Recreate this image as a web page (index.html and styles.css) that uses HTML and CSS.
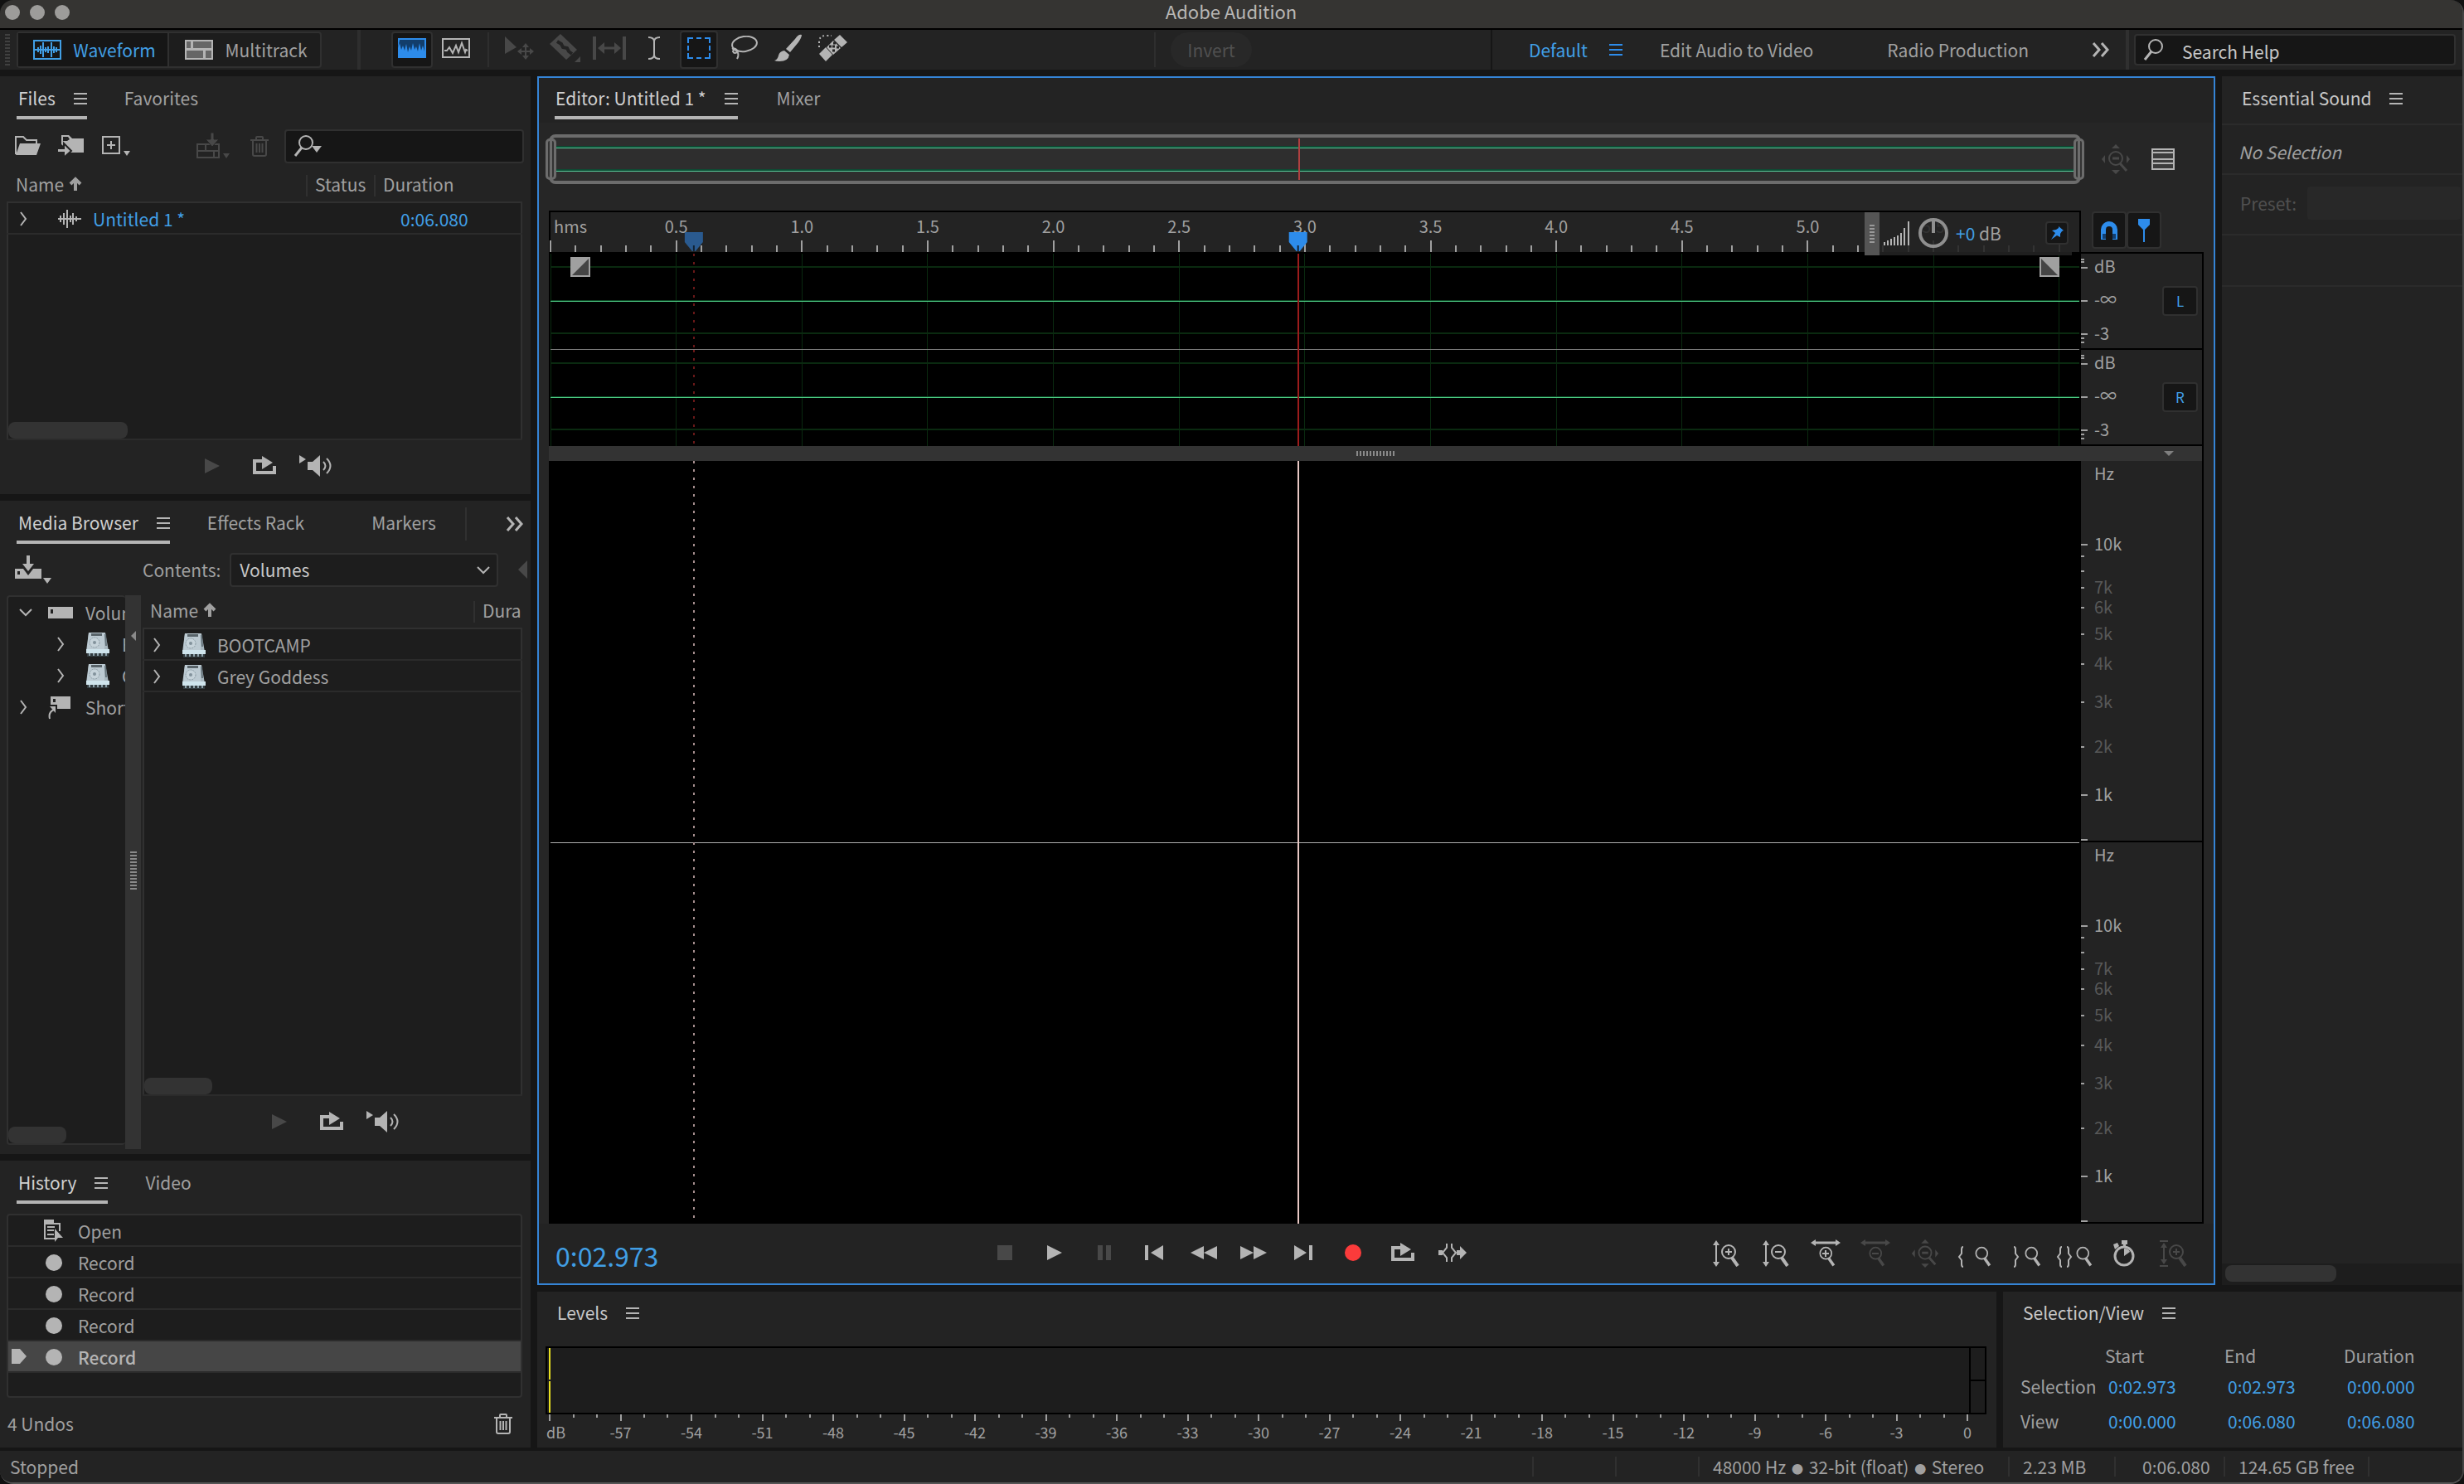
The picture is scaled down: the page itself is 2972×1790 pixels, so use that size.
FILE: index.html
```html
<!DOCTYPE html>
<html lang="en">
<head>
<meta charset="utf-8">
<title>Adobe Audition</title>
<link rel="stylesheet" href="styles.css">
</head>
<body>
<svg class="sprite" aria-hidden="true">
  <symbol id="menu" viewBox="0 0 16 14"><path d="M0 1h16M0 7h16M0 13h16" stroke="currentColor" stroke-width="2"/></symbol>
  <symbol id="more" viewBox="0 0 22 18"><path d="M2 1l7 8-7 8M12 1l7 8-7 8" fill="none" stroke="currentColor" stroke-width="3"/></symbol>
  <symbol id="right" viewBox="0 0 10 18"><path d="M2 1l6 8-6 8" fill="none" stroke="currentColor" stroke-width="2"/></symbol>
  <symbol id="down" viewBox="0 0 16 10"><path d="M1 1l7 7 7-7" fill="none" stroke="currentColor" stroke-width="2"/></symbol>
  <symbol id="up" viewBox="0 0 16 18"><path d="M8 17V3M2 9l6-6 6 6" fill="none" stroke="currentColor" stroke-width="4"/></symbol>
  <symbol id="search" viewBox="0 0 34 26"><circle cx="16" cy="9" r="8" fill="none" stroke="currentColor" stroke-width="2"/><path d="M11 15L3 25" stroke="currentColor" stroke-width="3"/></symbol>
  <symbol id="trash" viewBox="0 0 22 26"><path d="M0 6h22M7 5V3q0-1 1-1h6q1 0 1 1v2M3 7v16q0 2 2 2h12q2 0 2-2V7M7.500 10v11M11 10v11M14.500 10v11" fill="none" stroke="currentColor" stroke-width="2"/></symbol>
  <symbol id="play" viewBox="0 0 20 20"><path d="M1 1v18l18-9z" fill="currentColor"/></symbol>
  <symbol id="loop" viewBox="0 0 30 24"><path d="M12 6H3v14h24v-8" fill="none" stroke="currentColor" stroke-width="4"/><path d="M12 0l13 8-13 8z" fill="currentColor"/></symbol>
  <symbol id="autoplay" viewBox="0 0 42 28"><path d="M1 1l8 5-8 5zM11 9h6l9-8v26l-9-8h-6z" fill="currentColor"/><path d="M30 9q5 5 0 10M34 5q9 9 0 18" fill="none" stroke="currentColor" stroke-width="2"/></symbol>
  <symbol id="drive" viewBox="0 0 28 30"><path d="M3 1h20l4 22H0z" fill="#a9b8c0"/><path d="M3 1h19v20H1z" fill="#bccad2"/><path d="M6 2h13v3H6z" fill="#59646a"/><circle cx="10" cy="13" r="6" fill="#c6d3da" stroke="#8b9ba3" stroke-dasharray="2 1"/><circle cx="10" cy="13" r="2" fill="#82929b"/><path d="M23 3l1 14" stroke="#66747b" stroke-width="2"/><path d="M0 21h28v5H0z" fill="#cfe4ec"/><path d="M1 26h26v4H1z" fill="#333c40"/><path d="M4 26v3M9 26v3M14 26v3M19 26v3M24 26v3" stroke="#8fa3ac" stroke-width="2"/></symbol>
  <symbol id="lens" viewBox="0 0 22 30"><circle cx="9" cy="10" r="8" fill="none" stroke="currentColor" stroke-width="2"/><path d="M13 17l7 10" stroke="currentColor" stroke-width="4"/></symbol>
</svg>

<header class="titlebar">
  <div class="lights"><i></i><i></i><i></i></div>
  <h1>Adobe Audition</h1>
</header>

<nav class="toolbar">
  <span class="grip"></span>
  <div class="modes">
    <button class="on"><svg width="34" height="24" viewBox="0 0 34 24"><path d="M1 1h32v22H1zM1 12h32M6 9v6M9 7v10M12 3v18M15 9v6M18 8v8M22 3v18M25 8v8M28 9v6" fill="none" stroke="currentColor" stroke-width="2"/></svg>Waveform</button>
    <button><svg width="34" height="24" viewBox="0 0 34 24"><path d="M0 0h34v24H0z" fill="#b4b4b4"/><path d="M2 2h5v8H2zM10 2h22v8H10zM2 13h20v9H2zM25 13h7v9h-7z" fill="#666"/></svg>Multitrack</button>
  </div>
  <span class="rule thick"></span>
  <div class="views">
    <button class="on" aria-label="Spectral display"><svg width="34" height="24" viewBox="0 0 34 24"><path d="M0 0h34v24H0z" fill="#2d8ceb"/><path d="M2 2h30v14l-2-7-2 6-2-9-2 10-2-6-2 4-2-8-2 9-2-5-2 7-2-10-2 8-2-6-2 5-2-8-2 6z" fill="#123e6b"/></svg></button>
    <button aria-label="Waveform display"><svg width="34" height="24" viewBox="0 0 34 24"><path d="M1 1h32v22H1z" fill="none" stroke="#b4b4b4" stroke-width="2"/><path d="M3 15h3l3-4 4 7 4-9 3 8 4-11 4 11 1-3 2 1" fill="none" stroke="#b4b4b4" stroke-width="2"/></svg></button>
  </div>
  <span class="rule"></span>
  <div class="tools">
    <button disabled aria-label="Move tool"><svg width="38" height="28" viewBox="0 0 38 28"><path d="M1 0v21l14-8zM26 8l4 5h-3v4h4v-3l5 4-5 4v-3h-4v4h3l-4 5-4-5h3v-4h-4v3l-5-4 5-4v3h4v-4h-3z" fill="currentColor"/></svg></button>
    <button disabled aria-label="Razor tool"><svg width="38" height="36" viewBox="0 0 38 36"><path d="M14 1l20 19-13 12L1 13z" fill="currentColor"/><path d="M10 10l5 3 2 4 5 1 2 4 4 3" fill="none" stroke="#232323" stroke-width="4"/><path d="M38 28v7h-7z" fill="currentColor"/></svg></button>
    <button disabled aria-label="Slip tool"><svg width="40" height="28" viewBox="0 0 40 28"><path d="M2 0v28M38 0v28" stroke="currentColor" stroke-width="4"/><path d="M11 14h18" stroke="currentColor" stroke-width="3"/><path d="M6 14l8-7v14zM34 14l-8-7v14z" fill="currentColor"/></svg></button>
    <button aria-label="Time selection tool"><svg width="16" height="30" viewBox="0 0 16 30"><path d="M1 2q7 0 7 5 0-5 7-5M8 7v16M1 28q7 0 7-5 0 5 7 5" fill="none" stroke="currentColor" stroke-width="2"/></svg></button>
    <button class="on" aria-label="Marquee selection tool"><svg width="28" height="26" viewBox="0 0 28 26"><path d="M1 7V1h6M11 1h6M21 1h6v6M27 10v6M27 19v6h-6M17 25h-6M7 25H1v-6M1 16v-6" fill="none" stroke="currentColor" stroke-width="2"/></svg></button>
    <button aria-label="Lasso selection tool"><svg width="34" height="30" viewBox="0 0 34 30"><ellipse cx="18" cy="10" rx="15" ry="9" fill="none" stroke="currentColor" stroke-width="2" transform="rotate(-8 18 10)"/><path d="M3 16q4-2 7 3-4 4-6 0 1-4 5 0 3 4 0 9" fill="none" stroke="currentColor" stroke-width="2"/></svg></button>
    <button aria-label="Paintbrush selection tool"><svg width="34" height="34" viewBox="0 0 34 34"><path d="M33 1q-4-1-8 5L14 18l5 4L29 10q4-6 4-9zM12 20l6 5q-1 8-12 8-4 0-6-1 4-1 5-6 1-5 7-6z" fill="currentColor"/></svg></button>
    <button aria-label="Spot healing brush tool"><svg width="36" height="34" viewBox="0 0 36 34"><path d="M26 1l9 9-7 6-9-9zM9 16l8 9-8 8-8-9zM18 8l9 9-9 8-8-9z" fill="currentColor"/><path d="M13 15h3M18 11h3M17 20h3M22 16h3M17 15h3" stroke="#232323" stroke-width="3"/><path d="M1 16v-6q0-8 8-8h7" fill="none" stroke="currentColor" stroke-width="2" stroke-dasharray="2 3"/></svg></button>
  </div>
  <div class="options"><button class="pill" disabled>Invert</button></div>
  <div class="workspaces">
    <a class="current" href="#default">Default<svg class="menu"><use href="#menu"/></svg></a>
    <a href="#edit-audio">Edit Audio to Video</a>
    <a href="#radio">Radio Production</a>
    <button aria-label="More workspaces"><svg class="more"><use href="#more"/></svg></button>
  </div>
  <label class="help"><svg width="34" height="26"><use href="#search"/></svg><input type="text" placeholder="Search Help" aria-label="Search Help"></label>
</nav>

<main>
  <div class="side">
    <section class="panel files">
      <div class="tabs"><button class="tab on">Files<svg class="menu"><use href="#menu"/></svg></button><button class="tab">Favorites</button></div>
      <div class="bar">
        <button aria-label="Open file"><svg width="32" height="24" viewBox="0 0 32 24"><path d="M1 22V1h9l4 4h12v4" fill="none" stroke="currentColor" stroke-width="2"/><path d="M6 9h25l-5 14H1z" fill="currentColor"/></svg></button>
        <button aria-label="Import file"><svg width="34" height="28" viewBox="0 0 34 28"><path d="M5 12V1h9l4 4h14v17H16z" fill="currentColor"/><path d="M7 3h6l2 3-3 2H7z" fill="#232323"/><path d="M0 17h8v-6l9 9-9 8v-6H0z" fill="currentColor" stroke="#232323" stroke-width="2"/></svg></button>
        <button aria-label="New file"><svg width="36" height="24" viewBox="0 0 36 24"><path d="M2 1h20v20H2zM12 6v10M7 11h10" fill="none" stroke="currentColor" stroke-width="2"/><path d="M27 18h8l-4 6z" fill="currentColor"/></svg></button>
        <button class="insert" disabled aria-label="Insert into multitrack"><svg width="42" height="32" viewBox="0 0 42 32"><path d="M2 14h26v16H2zM2 22h26M12 14v8M22 22v8" fill="none" stroke="currentColor" stroke-width="2"/><path d="M18 0h4v8h6l-8 9-8-9h6z" fill="currentColor" stroke="#232323"/><path d="M33 25h8l-4 6z" fill="currentColor"/></svg></button>
        <button class="delete" disabled aria-label="Delete"><svg width="22" height="26"><use href="#trash"/></svg></button>
        <label class="filter"><svg width="34" height="26"><use href="#search"/></svg><svg class="caret" width="12" height="8" viewBox="0 0 12 8"><path d="M0 0h12L6 8z" fill="currentColor"/></svg><input type="text" aria-label="Filter files"></label>
      </div>
      <div class="list">
        <table>
          <thead><tr><th>Name<svg width="16" height="18"><use href="#up"/></svg></th><th class="status">Status</th><th class="dur">Duration</th></tr></thead>
          <tbody>
            <tr><td><span class="cell blue"><svg width="10" height="18"><use href="#right"/></svg><svg class="wave" width="28" height="22" viewBox="0 0 28 22"><path d="M0 11h28M3 7v8M7 4v14M11 0v22M15 7v8M18 4v14M22 8v6" stroke="currentColor" stroke-width="2"/></svg>Untitled 1 *</span></td><td></td><td class="blue time">0:06.080</td></tr>
            <tr class="fill"><td colspan="3"></td></tr>
          </tbody>
        </table>
        <span class="thumb"></span>
      </div>
      <div class="preview">
        <button disabled aria-label="Play"><svg width="20" height="20"><use href="#play"/></svg></button>
        <button aria-label="Loop playback"><svg width="30" height="24"><use href="#loop"/></svg></button>
        <button aria-label="Auto-play"><svg width="42" height="28"><use href="#autoplay"/></svg></button>
      </div>
    </section>

    <section class="panel media">
      <div class="tabs"><button class="tab on">Media Browser<svg class="menu"><use href="#menu"/></svg></button><button class="tab">Effects Rack</button><button class="tab">Markers</button><button class="overflow" aria-label="More panels"><svg class="more"><use href="#more"/></svg></button></div>
      <div class="bar">
        <button class="ingest" aria-label="Add shortcut"><svg width="44" height="34" viewBox="0 0 44 34"><path d="M0 16h10l6 8 6-8h10v12H0z" fill="currentColor"/><path d="M14 0h4v10h5l-7 9-7-9h5z" fill="currentColor"/><path d="M3 19h3v4H3z" fill="#232323"/><path d="M34 27h10l-5 7z" fill="currentColor"/></svg></button>
        <label for="contents">Contents:</label>
        <span class="select"><select id="contents"><option>Volumes</option></select><svg width="16" height="10"><use href="#down"/></svg></span>
        <button class="back" disabled aria-label="Back"><svg width="12" height="22" viewBox="0 0 12 22"><path d="M0 11L11 0v22z" fill="currentColor"/></svg></button>
      </div>
      <div class="browser">
        <div class="tree">
          <ul>
            <li><svg width="16" height="10"><use href="#down"/></svg><svg class="vol" width="30" height="14" viewBox="0 0 30 14"><path d="M0 0h30v14H0z" fill="#b4b4b4"/><path d="M3 3h3v5H3z" fill="#232323"/></svg>Volumes</li>
            <li class="sub"><svg width="16" height="18"><use href="#right"/></svg><svg width="28" height="30"><use href="#drive"/></svg>BOOTCAMP</li>
            <li class="sub"><svg width="16" height="18"><use href="#right"/></svg><svg width="28" height="30"><use href="#drive"/></svg>Grey Goddess</li>
            <li><svg class="tip" width="10" height="18"><use href="#right"/></svg><svg class="cut" width="30" height="30" viewBox="0 0 30 30"><path d="M3 2h24v15H11v-5H3z" fill="#b4b4b4"/><path d="M6 5h3v4H6z" fill="#232323"/><path d="M2 29q-2-8 5-11" fill="none" stroke="#b4b4b4" stroke-width="2"/><path d="M2 14h7v8z" fill="#b4b4b4"/></svg>Shortcuts</li>
          </ul>
          <span class="thumb"></span>
        </div>
        <div class="splitter"><svg width="6" height="12" viewBox="0 0 6 12"><path d="M0 6l6-6v12z" fill="#8a8a8a"/></svg><i class="dots"></i></div>
        <div class="contents">
          <div class="list">
            <table>
              <thead><tr><th>Name<svg width="16" height="18"><use href="#up"/></svg></th><th class="dur">Dura</th></tr></thead>
              <tbody>
                <tr><td colspan="2"><span class="cell"><svg width="10" height="18"><use href="#right"/></svg><svg class="disk" width="28" height="30"><use href="#drive"/></svg>BOOTCAMP</span></td></tr>
                <tr><td colspan="2"><span class="cell"><svg width="10" height="18"><use href="#right"/></svg><svg class="disk" width="28" height="30"><use href="#drive"/></svg>Grey Goddess</span></td></tr>
                <tr class="fill"><td colspan="2"></td></tr>
              </tbody>
            </table>
            <span class="thumb"></span>
          </div>
          <div class="preview">
            <button disabled aria-label="Play"><svg width="20" height="20"><use href="#play"/></svg></button>
            <button aria-label="Loop playback"><svg width="30" height="24"><use href="#loop"/></svg></button>
            <button aria-label="Auto-play"><svg width="42" height="28"><use href="#autoplay"/></svg></button>
          </div>
        </div>
      </div>
    </section>

    <section class="panel history">
      <div class="tabs"><button class="tab on">History<svg class="menu"><use href="#menu"/></svg></button><button class="tab">Video</button></div>
      <ol>
        <li><svg width="26" height="28" viewBox="0 0 26 28"><path d="M2 1v22h12M2 5h18v9" fill="none" stroke="currentColor" stroke-width="2"/><path d="M1 0h12v5H1zM14 11v16l4-5h6z" fill="currentColor"/><path d="M5 9h9M5 13h8M5 18h8" stroke="currentColor" stroke-width="2"/></svg>Open</li>
        <li><i class="dot"></i>Record</li>
        <li><i class="dot"></i>Record</li>
        <li><i class="dot"></i>Record</li>
        <li class="on"><svg class="here" width="18" height="18" viewBox="0 0 18 18"><path d="M0 0h10l8 9-8 9H0z" fill="currentColor"/></svg><i class="dot"></i>Record</li>
      </ol>
      <footer>4 Undos<button aria-label="Clear history"><svg width="22" height="26"><use href="#trash"/></svg></button></footer>
    </section>
  </div>

  <div class="work">
    <div class="upper">
      <section class="panel editor">
        <div class="tabs"><button class="tab on">Editor: Untitled 1 *<svg class="menu"><use href="#menu"/></svg></button><button class="tab">Mixer</button></div>
        <div class="stage">
          <div class="overview"><i class="lane"></i><i class="lane"></i><i class="handle left"></i><i class="handle right"></i><i class="head"></i></div>
          <div class="corner">
            <button disabled aria-label="Zoom out full"><svg width="34" height="36" viewBox="0 0 34 36"><path d="M17 0l5 5H12zM17 36l5-5H12zM0 18l4-5v10zM34 18l-4-5v10z" fill="currentColor"/><circle cx="17" cy="17" r="8" fill="none" stroke="currentColor" stroke-width="2"/><path d="M13 17h8M22 23l8 9" stroke="currentColor" stroke-width="3"/></svg></button>
            <button aria-label="Show list"><svg width="28" height="26" viewBox="0 0 28 26"><path d="M0 0h28v26H0z" fill="#b4b4b4"/><path d="M2 2h24v2H2zM2 6h24v6H2zM2 14h24v3H2zM2 19h24v5H2z" fill="#3c3c3c"/></svg></button>
          </div>

          <div class="ruler">
            <svg id="ruler" width="100%" height="48"></svg>
            <div class="hud">
              <span class="hold"><i></i></span>
              <svg width="32" height="30" viewBox="0 0 32 30"><path d="M1 30v-4M5 30v-6M9 30v-8M13 30v-10M17 30V18M21 30V15M25 30V9M30 30V1" stroke="#b4b4b4" stroke-width="2"/></svg>
              <svg width="36" height="36" viewBox="0 0 36 36"><circle cx="18" cy="18" r="16" fill="none" stroke="#8f8f8f" stroke-width="4"/><path d="M18 1v17" stroke="#8f8f8f" stroke-width="4"/></svg>
              <span class="gain"><b>+0</b> dB</span>
              <button class="key" aria-label="Pin HUD"><svg width="18" height="18" viewBox="0 0 18 18"><path d="M11 1l6 5-2 1-2 3v4l-4-2-7 5 5-8-4-3 5-1 3-2z" fill="#2d8ceb"/></svg></button>
            </div>
          </div>
          <div class="snaps">
            <button class="key" aria-label="Snapping"><svg width="24" height="25" viewBox="0 0 24 25"><path d="M5 24V12a7 7 0 0 1 14 0v12" fill="none" stroke="#2d8ceb" stroke-width="6"/><path d="M4 17h4v6H4zM16 17h4v6h-4z" fill="#124072"/></svg></button>
            <button class="key" aria-label="Show markers"><svg width="14" height="28" viewBox="0 0 14 28"><path d="M0 0h14v7l-6 6v15H6V13L0 7z" fill="#2d8ceb"/></svg></button>
          </div>

          <div class="channel first"><svg class="wavebox" width="100%" height="116"></svg>
            <svg class="fade in" width="24" height="24" viewBox="0 0 24 24"><path d="M0 0h24v24H0z" fill="#a0a0a0"/><path d="M22 2v20H2z" fill="#444"/></svg>
            <svg class="fade out" width="24" height="24" viewBox="0 0 24 24"><path d="M0 0h24v24H0z" fill="#a0a0a0"/><path d="M2 2v20h20z" fill="#444"/></svg>
          </div>
          <div class="scale db first"><svg width="66" height="114"><path d="M0 7h4M0 10h4M0 17h8M0 57h8M0 97h8M0 102h4M0 107h4" stroke="#a0a0a0" stroke-width="2"/><text x="16" y="23">dB</text><text x="16" y="63">-∞</text><text x="16" y="104">-3</text></svg><button class="key">L</button></div>
          <div class="channel"><svg class="wavebox" width="100%" height="116"></svg></div>
          <div class="scale db"><svg width="66" height="114"><path d="M0 7h4M0 10h4M0 17h8M0 57h8M0 97h8M0 102h4M0 107h4" stroke="#a0a0a0" stroke-width="2"/><text x="16" y="23">dB</text><text x="16" y="63">-∞</text><text x="16" y="104">-3</text></svg><button class="key">R</button></div>

          <div class="divider"><i class="dots"></i><svg width="12" height="6" viewBox="0 0 12 6"><path d="M0 0h12L6 6z" fill="#808080"/></svg></div>

          <div class="spectrum"><svg class="specbox" width="100%" height="100%"></svg></div>
          <div class="scale hz"><svg class="hertz" width="100%" height="100%"></svg></div>
          <div class="spectrum"><svg class="specbox" width="100%" height="100%"></svg></div>
          <div class="scale hz"><svg class="hertz" width="100%" height="100%"></svg></div>
        </div>
        <div class="controls">
          <output class="clock">0:02.973</output>
          <div class="transport">
            <button disabled aria-label="Stop"><svg width="18" height="18"><path d="M0 0h18v18H0z" fill="currentColor"/></svg></button>
            <button aria-label="Play"><svg width="20" height="20"><use href="#play"/></svg></button>
            <button disabled aria-label="Pause"><svg width="16" height="18"><path d="M0 0h6v18H0zM10 0h6v18h-6z" fill="currentColor"/></svg></button>
            <button aria-label="Previous"><svg width="22" height="18"><path d="M0 0h4v18H0zM22 0v18L7 9z" fill="currentColor"/></svg></button>
            <button aria-label="Rewind"><svg width="32" height="16"><path d="M16 0v16L0 8zM32 0v16L16 8z" fill="currentColor"/></svg></button>
            <button aria-label="Fast forward"><svg width="32" height="16"><path d="M0 0v16l16-8zM16 0v16l16-8z" fill="currentColor"/></svg></button>
            <button aria-label="Next"><svg width="22" height="18"><path d="M18 0h4v18h-4zM0 0v18l15-9z" fill="currentColor"/></svg></button>
            <button aria-label="Record"><svg width="20" height="20"><circle cx="10" cy="10" r="10" fill="#fb3b3b"/></svg></button>
            <button aria-label="Loop"><svg width="30" height="24"><use href="#loop"/></svg></button>
            <button aria-label="Skip selection"><svg width="34" height="22" viewBox="0 0 34 22"><path d="M0 8h5v6H0zM22 8h4V3l8 8-8 8v-5h-4z" fill="currentColor"/><path d="M10 0v5l-5 6 5 6v5M16 0v5l5 6-5 6v5" fill="none" stroke="currentColor" stroke-width="2"/></svg></button>
          </div>
          <div class="zooms">
            <button aria-label="Zoom in amplitude"><svg width="34" height="32" viewBox="0 0 34 32"><path d="M5 3v26" stroke="currentColor" stroke-width="2"/><path d="M5 0l4 6H1zM5 32l4-6H1z" fill="currentColor"/><use href="#lens" x="11" y="4" width="22" height="30"/><path d="M16 14h8M20 10v8" stroke="currentColor" stroke-width="2"/></svg></button>
            <button aria-label="Zoom out amplitude"><svg width="34" height="32" viewBox="0 0 34 32"><path d="M5 3v26" stroke="currentColor" stroke-width="2"/><path d="M5 0l4 6H1zM5 32l4-6H1z" fill="currentColor"/><use href="#lens" x="11" y="4" width="22" height="30"/><path d="M16 14h8" stroke="currentColor" stroke-width="2"/></svg></button>
            <button aria-label="Zoom in time"><svg width="36" height="34" viewBox="0 0 36 34"><path d="M4 4h28" stroke="currentColor" stroke-width="3"/><path d="M0 4l6-4v8zM36 4l-6-4v8z" fill="currentColor"/><use href="#lens" x="10" y="8" width="20" height="26"/><path d="M14 17h8M18 13v8" stroke="currentColor" stroke-width="2"/></svg></button>
            <button disabled aria-label="Zoom out time"><svg width="36" height="34" viewBox="0 0 36 34"><path d="M4 4h28" stroke="currentColor" stroke-width="3"/><path d="M0 4l6-4v8zM36 4l-6-4v8z" fill="currentColor"/><use href="#lens" x="10" y="8" width="20" height="26"/><path d="M14 17h8" stroke="currentColor" stroke-width="2"/></svg></button>
            <button disabled aria-label="Zoom out full"><svg width="34" height="34" viewBox="0 0 34 36"><path d="M17 0l5 5H12zM17 36l5-5H12zM0 18l4-5v10zM34 18l-4-5v10z" fill="currentColor"/><circle cx="17" cy="17" r="8" fill="none" stroke="currentColor" stroke-width="2"/><path d="M13 17h8M22 23l8 9" stroke="currentColor" stroke-width="3"/></svg></button>
            <button aria-label="Zoom to in point"><svg class="low" width="42" height="26" viewBox="0 0 42 26"><path d="M7 1q-2 0-2 3v5l-3 4 3 4v5q0 3 2 3" fill="none" stroke="currentColor" stroke-width="2"/><use href="#lens" x="20" y="0" width="22" height="26"/></svg></button>
            <button aria-label="Zoom to out point"><svg class="low" width="42" height="26" viewBox="0 0 42 26"><path d="M8 1q2 0 2 3v5l3 4-3 4v5q0 3-2 3" fill="none" stroke="currentColor" stroke-width="2"/><use href="#lens" x="20" y="0" width="22" height="26"/></svg></button>
            <button aria-label="Zoom to selection"><svg class="low" width="44" height="26" viewBox="0 0 44 26"><path d="M7 1q-2 0-2 3v5l-3 4 3 4v5q0 3 2 3M13 1q2 0 2 3v5l3 4-3 4v5q0 3-2 3" fill="none" stroke="currentColor" stroke-width="2"/><use href="#lens" x="23" y="0" width="22" height="26"/></svg></button>
            <button aria-label="Zoom preset"><svg width="28" height="32" viewBox="0 0 28 32"><circle cx="14" cy="19" r="11" fill="none" stroke="currentColor" stroke-width="3"/><path d="M14 19V10q6 0 7 4zM11 0h7v5h-2v4h-3V5h-2zM1 5l5-2 2 4-5 4z" fill="currentColor"/></svg></button>
            <button disabled aria-label="Zoom selected track"><svg width="34" height="32" viewBox="0 0 34 32"><path d="M0 1h10M0 31h10" stroke="currentColor" stroke-width="2"/><path d="M5 4v24" stroke="currentColor" stroke-width="2"/><path d="M5 3l4 6H1zM5 29l4-6H1z" fill="currentColor"/><use href="#lens" x="11" y="4" width="22" height="30"/><path d="M16 14h8M20 10v8" stroke="currentColor" stroke-width="2"/></svg></button>
          </div>
        </div>
      </section>

      <aside class="panel sound">
        <div class="tabs"><h2 class="tab">Essential Sound<svg class="menu"><use href="#menu"/></svg></h2></div>
        <p class="none">No Selection</p>
        <label class="preset">Preset:<input type="text" disabled></label>
        <div class="blank"></div>
        <div class="track"><span class="thumb"></span></div>
      </aside>
    </div>

    <div class="lower">
      <section class="panel levels">
        <div class="tabs"><h2 class="tab">Levels<svg class="menu"><use href="#menu"/></svg></h2></div>
        <div class="meter"><div class="bars"><i></i><i></i></div><div class="clip"><i></i><i></i></div></div>
        <svg id="levels" width="100%" height="40"></svg>
      </section>
      <section class="panel selview">
        <div class="tabs"><h2 class="tab">Selection/View<svg class="menu"><use href="#menu"/></svg></h2></div>
        <table>
          <thead><tr><td></td><th>Start</th><th>End</th><th>Duration</th></tr></thead>
          <tbody>
            <tr><th>Selection</th><td>0:02.973</td><td>0:02.973</td><td>0:00.000</td></tr>
            <tr><th>View</th><td>0:00.000</td><td>0:06.080</td><td>0:06.080</td></tr>
          </tbody>
        </table>
      </section>
    </div>
  </div>
</main>

<footer class="statusbar">
  <span class="state">Stopped</span>
  <span class="slot s1"></span><span class="slot s2"></span>
  <span class="slot s3">48000 Hz <i>●</i> 32-bit (float) <i>●</i> Stereo</span>
  <span class="slot s4">2.23 MB</span>
  <span class="slot s5">0:06.080</span>
  <span class="slot s6">124.65 GB free</span>
  <span class="slot s7"></span>
</footer>
<script src="timeline.js"></script>
</body>
</html>
```
FILE: styles.css
```css
* { box-sizing: border-box; }
html { background: #111; }
body {
  margin: 0;
  height: 100vh;
  display: flex;
  flex-direction: column;
  background: #161616;
  border-right: 2px solid #444;
  border-bottom: 2px solid #555;
  border-radius: 16px;
  overflow: hidden;
  color: #a0a0a0;
  font: 21px/26px "Noto Sans CJK SC", "Noto Sans", sans-serif;
}
h1, h2, p, ul, ol { margin: 0; padding: 0; font: inherit; list-style: none; }
button {
  display: flex; align-items: center; justify-content: center;
  margin: 0; padding: 0; border: 0; background: none;
  font: inherit; color: #b4b4b4; flex: none;
}
button:disabled { color: #484848; }
input, select { font: inherit; color: #c8c8c8; background: none; border: 0; padding: 0; margin: 0; min-width: 0; appearance: none; }
input::placeholder { color: #c8c8c8; opacity: 1; }
svg { display: block; flex: none; }
text { fill: #a0a0a0; font-size: 20px; }
a { color: inherit; text-decoration: none; }
.sprite { position: absolute; width: 0; height: 0; }
.menu { width: 16px; height: 14px; margin-top: 2px; color: #b4b4b4; }
.more { width: 22px; height: 18px; color: #b4b4b4; }
.blue { color: #419fe5; }
.thumb { position: absolute; left: 2px; bottom: 2px; height: 20px; border-radius: 8px; background: #333; }
.dots { display: block; background: repeating-linear-gradient(90deg, #8a8a8a 0 2px, transparent 2px 4px); }

.titlebar { height: 36px; flex: none; display: flex; align-items: center; justify-content: center; position: relative; background: #353432; border-bottom: 2px solid #000; padding-bottom: 8px; }
.titlebar h1 { color: #b8b7b5; font-size: 22px; }
.lights { position: absolute; left: 6px; top: 6px; display: flex; gap: 12px; }
.lights i { width: 18px; height: 18px; border-radius: 50%; background: #9d9c9a; }

.toolbar { height: 48px; flex: none; display: flex; align-items: center; background: #232323; margin-bottom: 8px; }
.grip { width: 6px; height: 38px; margin: 0 8px 0 6px; background: repeating-linear-gradient(#404040 0 2px, #232323 2px 4px); }
.modes { display: flex; height: 44px; border: 2px solid #303030; border-radius: 4px; background: #1d1d1d; }
.modes button { width: 182px; gap: 14px; padding-left: 4px; color: #a0a0a0; }
.modes .on { background: #161616; color: #419fe5; border-right: 2px solid #303030; }
.rule { width: 2px; height: 42px; background: #2e2e2e; }
.rule.thick { width: 4px; height: 48px; margin: 0 37px 0 43px; }
.views { display: flex; gap: 3px; margin-right: 13px; }
.views button { width: 50px; height: 44px; padding-bottom: 4px; }
.views .on, .tools .on { background: #161616; border: 2px solid #303030; border-radius: 4px; color: #2d8ceb; }
.tools { display: flex; gap: 8px; margin-left: 14px; }
.tools button { width: 46px; height: 46px; padding-bottom: 4px; }
.options { width: 406px; height: 42px; margin-left: auto; border-left: 2px solid #2e2e2e; padding-left: 18px; }
.pill { width: 98px; height: 42px; border-radius: 21px; background: #282828; }
.pill:disabled { color: #505050; }
.workspaces { width: 770px; height: 48px; display: flex; align-items: center; border-left: 2px solid #161616; padding-left: 44px; border-right: 4px solid #303030; }
.workspaces a { margin-right: 89px; white-space: nowrap; }
.workspaces .current { display: flex; align-items: center; gap: 26px; color: #419fe5; margin-right: 45px; }
.workspaces .current .menu { color: #2d8ceb; margin: 0; }
.workspaces button { margin-left: auto; margin-right: 19px; }
.workspaces a:nth-child(3) { margin-right: 0; }
.help { width: 388px; height: 38px; margin: 0 8px 0 6px; display: flex; align-items: center; gap: 14px; padding-left: 8px; background: #161616; border: 2px solid #303030; border-radius: 4px; color: #b4b4b4; }
.help input { padding-top: 4px; }

main { flex: 1; display: flex; gap: 8px; padding-bottom: 4px; min-height: 0; }
.panel { background: #232323; min-width: 0; min-height: 0; display: flex; flex-direction: column; }
.side { width: 640px; flex: none; display: grid; grid-template-rows: 504fr 788fr 346fr; gap: 8px; }
.tabs { height: 56px; flex: none; display: flex; align-items: flex-start; padding-left: 20px; }
.tab { height: 52px; display: flex; align-items: center; gap: 22px; margin-right: 43px; padding: 4px 0 0 2px; border-bottom: 4px solid transparent; color: #a0a0a0; white-space: nowrap; }
.tab:not(.on):not(h2) { margin-right: 79px; }
.media .tabs .tab + .tab + .tab { margin-right: 0; }
.tab.on { color: #d0d0d0; border-color: #b4b4b4; }
h2.tab { color: #c8c8c8; }

.bar { height: 52px; flex: none; display: flex; align-items: center; padding: 2px 8px 0 18px; }
.files .bar { gap: 19px; height: 56px; padding-bottom: 2px; }
.insert { margin-left: 59px; }
.delete { margin-left: 5px; }
.filter { flex: 1; height: 41px; display: flex; align-items: center; padding-left: 8px; background: #161616; border: 2px solid #303030; border-radius: 4px; color: #b4b4b4; }
.filter input { flex: 1; }
.filter .caret { margin: 8px 0 0 -11px; }
.list { flex: 1; position: relative; min-height: 0; }
table { border-collapse: collapse; border-spacing: 0; }
th, td { padding: 0; font-weight: 400; text-align: left; white-space: nowrap; }
.list table { width: 100%; height: 100%; table-layout: fixed; }
.list thead tr { height: 40px; }
.list th { overflow: hidden; padding: 0 0 3px 8px; }
.list th svg { display: inline-block; margin-left: 6px; }
.list th + th { padding-left: 11px; background: linear-gradient(#303030, #303030) left center / 2px 26px no-repeat; }
.list tbody { border: 2px solid #303030; background: #1d1d1d; }
.list tbody tr { height: 38px; }
.list tbody tr.fill { height: auto; }
.list tbody td { border-bottom: 2px solid #2b2b2b; }
.cell { display: flex; align-items: center; height: 36px; padding-top: 1px; }
.cell svg:first-child { color: #b4b4b4; }
.cell .wave { color: #b4b4b4; margin: 0 14px 0 37px; }
.files .list { margin: 0 10px 0 8px; }
.files .list th:first-child { padding-left: 10px; }
.files .status { width: 82px; }
.files .dur { width: 178px; }
.files .cell { padding-left: 13px; }
.files .time { padding: 1px 0 0 32px; }
.files .list .thumb { width: 144px; }
.preview { height: 65px; flex: none; display: flex; align-items: center; justify-content: center; gap: 38px; padding: 0 0 4px 8px; }
.preview button + button + button { margin-left: -12px; }

.overflow { margin-left: auto; margin-right: 7px; height: 40px; width: 72px; padding-left: 46px; border-left: 2px solid #303030; margin-top: 8px; }
.media .bar { height: 58px; padding-bottom: 6px; }
.ingest { margin-right: 110px; }
.bar label { margin-right: 11px; }
.files .bar label { margin-right: 0; }
.select { position: relative; width: 324px; display: flex; }
.select select { width: 100%; height: 41px; padding-left: 10px; background: #1d1d1d; border: 2px solid #303030; border-radius: 4px; }
.select svg { position: absolute; right: 10px; top: 16px; color: #b4b4b4; pointer-events: none; }
.back { margin-left: auto; margin-right: -5px; }
.browser { flex: 1; display: flex; min-height: 0; padding: 0 10px 0 8px; }
.tree { width: 143px; margin-bottom: 11px; position: relative; overflow: hidden; background: #1d1d1d; border: 2px solid #303030; border-right-width: 0; border-radius: 4px; }
.tree li { display: flex; align-items: center; height: 38px; padding-left: 13px; white-space: nowrap; }
.tree li svg:first-child { color: #b4b4b4; }
.tree .tip { margin-right: 6px; }
.tree .vol, .tree .cut { margin: 0 15px 0 19px; }
.tree .sub { padding-left: 55px; }
.tree .sub svg + svg { margin: 0 15px 0 23px; }
.tree .thumb { left: 0; bottom: 0; width: 70px; }
.splitter { width: 19px; margin: 0 2px 6px 0; background: #333; display: flex; flex-direction: column; align-items: center; padding-top: 43px; }
.splitter .dots { width: 8px; height: 48px; margin: 254px 0 0; background: repeating-linear-gradient(#8a8a8a 0 2px, transparent 2px 4px); }
.contents { flex: 1; min-width: 0; display: flex; flex-direction: column; }
.contents .dur { width: 58px; }
.contents .cell { padding-left: 10px; }
.contents .disk { margin: 0 14px 0 26px; }
.contents .thumb { width: 82px; }
.contents .preview { height: 70px; padding-bottom: 8px; }

.history ol { flex: 1; margin: 8px 10px 0 8px; min-height: 0; background: #1d1d1d; border: 2px solid #303030; border-radius: 4px; }
.history li { height: 38px; display: flex; align-items: center; padding: 2px 0 0 42px; gap: 16px; border-bottom: 2px solid #2b2b2b; position: relative; }
.history li svg { color: #b4b4b4; }
.history .dot { width: 20px; height: 20px; margin: 0 3px; border-radius: 50%; background: #b4b4b4; }
.history li.on { background: #464646; font-weight: 500; color: #b4b4b4; }
.history .here { position: absolute; left: 4px; top: 9px; }
.history footer { height: 60px; flex: none; display: flex; justify-content: space-between; align-items: center; padding: 2px 22px 0 9px; }

.work { flex: 1; min-width: 0; display: flex; flex-direction: column; gap: 8px; }
.upper { flex: 1; min-height: 0; display: flex; gap: 8px; }
.lower { display: flex; flex: none; gap: 8px; height: 188px; }
.editor { flex: 1; border: 2px solid #3584d6; }
.editor .tabs { height: 54px; padding-left: 19px; }
.editor .tab { height: 50px; padding: 2px 0 0 1px; }
.editor .tab.on { margin-right: 46px; }
.stage {
  flex: 1; min-height: 0; padding: 14px 12px 0; background: #262626;
  display: grid; grid-template-columns: 1fr 148px;
  grid-template-rows: 92px 50px 118px 116px 18px 1fr 1fr;
}
.overview { height: 60px; position: relative; border: 4px solid #6c6c6c; border-radius: 8px; background: #2e2e2e; display: flex; flex-direction: column; gap: 25px; padding-top: 10px; }
.lane { height: 3px; border-top: 2px solid #0d4a33; border-bottom: 1px solid #58c99a; }
.handle { position: absolute; top: 1px; width: 13px; height: 50px; border: 3px solid #6c6c6c; border-radius: 5px; background: repeating-linear-gradient(90deg, #333 0 2px, #6c6c6c 2px 5px); }
.handle.left { left: -8px; }
.handle.right { right: -8px; }
.head { position: absolute; left: 48.9%; top: 1px; bottom: 1px; width: 2px; background: #b04040; }
.corner { display: flex; gap: 26px; padding-left: 25px; height: 60px; align-items: center; }
.ruler { position: relative; background: #232323; border: 2px solid #000; border-bottom: 0; }
.ruler > svg { overflow: visible; }
.hud { position: absolute; right: 9px; top: 0; width: 250px; height: 52px; background: rgba(35, 35, 35, .88); display: flex; align-items: center; z-index: 1; padding-bottom: 2px; }
.hold { width: 18px; height: 52px; margin: 2px 5px 0 0; background: #555; padding: 15px 6px; }
.hold i { display: block; width: 6px; height: 22px; background: repeating-linear-gradient(#999 0 2px, #555 2px 4px); }
.hud svg + svg { margin: 0 9px 0 10px; }
.gain { white-space: nowrap; }
.gain b { font-weight: 400; color: #419fe5; }
.hud .key { width: 28px; height: 28px; margin-left: auto; margin-right: 4px; }
.key { background: #161616; border: 2px solid #303030; border-radius: 4px; }
.snaps { display: flex; align-items: flex-start; padding: 1px 0 0 13px; }
.snaps .key { width: 42px; height: 45px; }
.channel { position: relative; background: #000; height: 116px; align-self: end; border: solid #000; border-width: 0 2px; }
.channel.first, .scale.first { box-shadow: 0 -2px #000; }
.fade { position: absolute; top: 4px; }
.fade.in { left: 24px; }
.fade.out { right: 24px; }
.scale { background: #232323; border-right: 2px solid #000; }
.db { border-bottom: 2px solid #000; display: flex; align-items: center; height: 116px; align-self: end; }
.db .key { width: 43px; height: 36px; margin: 0 5px 0 auto; font-size: 17px; color: #419fe5; }
.divider { grid-column: 1 / -1; background: #333; border-right: 2px solid #000; display: flex; align-items: center; justify-content: flex-end; gap: 926px; padding-right: 34px; }
.divider .dots { width: 48px; height: 6px; }
.spectrum { background: #000; min-height: 0; border: solid #000; border-width: 0 2px; }
.hz { border-bottom: 2px solid #000; min-height: 0; }
.spectrum svg, .hz svg { height: 100%; }
.controls { height: 72px; flex: none; display: flex; align-items: center; padding-right: 18px; }
.clock { flex: 1; color: #419fe5; font-size: 32px; padding: 4px 0 0 20px; }
.transport, .zooms { display: flex; flex: none; }
.transport button, .zooms button { width: 60px; height: 40px; }
.transport { margin-right: 270px; padding-bottom: 2px; }
.low { margin-top: 8px; }

.sound { width: 290px; flex: none; }
.sound .tabs, .levels .tabs, .selview .tabs { padding-left: 22px; }
.none { height: 62px; border: solid #2b2b2b; border-width: 2px 0; padding: 19px 0 0 20px; font-style: italic; margin-top: 1px; }
.preset { height: 73px; display: flex; align-items: center; gap: 13px; padding: 0 2px 4px 22px; color: #505050; border-bottom: 2px solid #2b2b2b; }
.preset input { flex: 1; height: 40px; background: #282828; border-radius: 4px; }
.blank { height: 62px; border-bottom: 2px solid #2b2b2b; }
.track { position: relative; height: 26px; margin-top: auto; background: #1d1d1d; }
.track .thumb { left: 4px; bottom: 4px; width: 134px; }

.levels { flex: 1; }
.levels .tab, .selview .tab { padding-top: 2px; }
.meter { margin: 10px 12px 0 10px; height: 82px; flex: none; display: flex; background: #1d1d1d; border: 2px solid #000; }
.bars { flex: 1; display: flex; flex-direction: column; gap: 2px; padding-left: 2px; }
.bars i { flex: 1; border-left: 2px solid #e8e020; }
.clip { width: 19px; border-left: 2px solid #000; display: flex; flex-direction: column; }
.clip i { flex: 1; }
.clip i + i { border-top: 2px solid #000; }
#levels { padding: 0 35px 0 15px; overflow: visible; }
#levels text { font-size: 18px; }
.selview { width: 554px; flex: none; }
.selview table { margin: 5px 0 0 21px; table-layout: fixed; width: 524px; }
.selview thead tr { height: 32px; }
.selview tr { height: 42px; }
.selview thead td { width: 102px; }
.selview thead th { width: 144px; }
.selview tbody td { padding-left: 4px; color: #419fe5; }

.statusbar { height: 38px; flex: none; display: flex; align-items: center; background: #232323; }
.state { padding-left: 12px; }
.slot { height: 24px; line-height: 24px; border-left: 2px solid #303030; white-space: nowrap; padding-left: 16px; }
.slot i { display: inline-block; font-size: 14px; font-style: normal; line-height: 20px; vertical-align: 1px; margin: 0 2px; }
.s1 { margin-left: auto; width: 100px; }
.s2 { width: 100px; }
.s3 { width: 374px; }
.s4 { width: 128px; }
.s5 { width: 132px; padding-left: 32px; }
.s6 { width: 174px; }
.s7 { width: 114px; }
```
FILE: timeline.js
```javascript
const LENGTH = 6.08;
const PLAYHEAD = 2.973;
const MARKER = 0.57;
const at = t => (t / LENGTH * 100) + '%';
const line = (x1, y1, x2, y2, color, w, extra) =>
  `<line x1="${x1}" y1="${y1}" x2="${x2}" y2="${y2}" stroke="${color}" stroke-width="${w}" shape-rendering="crispEdges" ${extra || ''}/>`;
const pin = (t, color) =>
  `<svg x="${at(t)}" y="24" overflow="visible"><path d="M-11 0h22v12L2 23h-4l-9-11z" fill="${color}"/><path d="M0 16v7" stroke="#123" stroke-width="2"/></svg>`;

let ruler = '<text x="4" y="25">hms</text>';
for (let i = 0; i <= 60; i++) {
  const major = i % 5 === 0;
  ruler += line(at(i / 10), major ? 34 : 40, at(i / 10), 48, '#a0a0a0', 2);
  if (major && i && i < 60) ruler += `<text x="${at(i / 10)}" y="25" text-anchor="middle">${(i / 10).toFixed(1)}</text>`;
}
document.getElementById('ruler').innerHTML = ruler + pin(MARKER, '#2a5a8f') + pin(PLAYHEAD, '#2d8ceb');

document.querySelectorAll('.wavebox').forEach((box, n) => {
  let s = '';
  for (let i = 0; i <= 60; i += 5) s += line(at(i / 10), 0, at(i / 10), 116, '#0a2a10', 1);
  s += line(0, 16, '100%', 16, '#0a2a10', 2) + line(0, 96, '100%', 96, '#0a2a10', 2);
  if (n === 0) s += line(0, 115, '100%', 115, '#808080', 1);
  s += line(0, 56, '100%', 56, '#0d4a26', 1) + line(0, 57, '100%', 57, '#4cc882', 1);
  s += line(at(MARKER), 0, at(MARKER), 116, '#6a1818', 2, 'stroke-dasharray="3 7"');
  s += line(at(PLAYHEAD), 0, at(PLAYHEAD), 116, '#9c1c1c', 2);
  box.innerHTML = s;
});

document.querySelectorAll('.specbox').forEach((box, n) => {
  box.innerHTML = (n ? line(0, 0, '100%', 0, '#b0b0b0', 2) : '') +
    line(at(MARKER), 0, at(MARKER), '100%', '#a89090', 2, 'stroke-dasharray="3 7"') +
    line(at(PLAYHEAD), 0, at(PLAYHEAD), '100%', '#e8c8c4', 2);
});

const bands = [['10k', 22, 1], ['', 25.1], ['', 29], ['7k', 33.4], ['6k', 38.6], ['5k', 45.6], ['4k', 53.5], ['3k', 63.5], ['2k', 75.3], ['1k', 88, 1]];
document.querySelectorAll('.hertz').forEach(box => {
  let s = '<text x="16" y="23">Hz</text>' + line(0, '99.800%', 8, '99.800%', '#a0a0a0', 2);
  bands.forEach(([name, y, major]) => {
    s += line(0, y + '%', major ? 8 : 4, y + '%', '#a0a0a0', 2);
    s += `<text x="16" y="${y}%" dy="7"${major ? '' : ' style="fill:#585858"'}>${name}</text>`;
  });
  box.innerHTML = s;
});

let levels = '';
for (let db = -60; db <= 0; db++) {
  const x = ((db + 60) / 60 * 100) + '%';
  const major = db % 3 === 0;
  levels += line(x, 0, x, major ? 8 : 4, '#a0a0a0', 2);
  if (major) levels += `<text x="${x}" y="29"${db > -60 ? ' text-anchor="middle"' : ' dx="-4"'}>${db > -60 ? db : 'dB'}</text>`;
}
document.getElementById('levels').innerHTML = levels;
```
